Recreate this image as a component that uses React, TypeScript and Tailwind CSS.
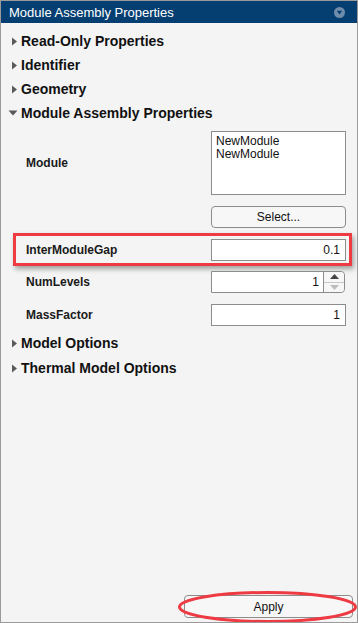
import React from "react";

const font = { fontFamily: '"Liberation Sans", Arial, sans-serif' };

function RightTri() {
  return (
    <svg width="5" height="9" viewBox="0 0 5 9" className="shrink-0">
      <path d="M0 0.5 L5 4.5 L0 8.5 Z" fill="#5a5a5a" />
    </svg>
  );
}
function DownTri() {
  return (
    <svg width="10" height="6" viewBox="0 0 10 6" className="shrink-0">
      <path d="M0.5 0.5 L9.5 0.5 L5 5.5 Z" fill="#5a5a5a" />
    </svg>
  );
}

function Section({ label, open = false }: { label: string; open?: boolean }) {
  return (
    <div className="flex h-[24px] items-center">
      <div className={open ? "flex w-[20px] justify-start pl-[7px]" : "flex w-[20px] justify-start pl-[11px]"}>
        {open ? <DownTri /> : <RightTri />}
      </div>
      <span className="text-[14px] font-bold text-[#111] leading-none">{label}</span>
    </div>
  );
}

function Field({ value }: { value: string }) {
  return (
    <div className="flex h-[22px] w-[135px] items-center justify-end border border-[#8c8c8c] bg-white pr-[5px] text-[12px] text-[#111]">
      {value}
    </div>
  );
}

const labelCls = "w-[185px] text-[12px] font-bold text-[#1a1a1a]";

export default function App() {
  return (
    <div
      style={font}
      className="relative flex h-[623px] w-[358px] flex-col overflow-hidden border border-[#9a9a9a] bg-[#f4f4f4]"
    >
      <div className="flex h-[22px] shrink-0 items-center justify-between bg-[#053f72] pl-[8px] pr-[12px]">
        <span className="text-[13px] text-white leading-none">Module Assembly Properties</span>
        <svg width="11" height="11" viewBox="0 0 11 11">
          <circle cx="5.5" cy="5.5" r="5.5" fill="#6f8cab" />
          <path d="M2.8 3.8 L8.2 3.8 L5.5 7.6 Z" fill="#053f72" />
        </svg>
      </div>

      <div className="flex flex-col pt-[6px]">
        <Section label="Read-Only Properties" />
        <Section label="Identifier" />
        <Section label="Geometry" />
        <Section label="Module Assembly Properties" open />

        <div className="mt-[6px] flex items-center pl-[25px]">
          <span className={labelCls}>Module</span>
          <div className="h-[64px] w-[135px] border border-[#8c8c8c] bg-white px-[4px] pt-[3px] text-[12px] leading-[13px] text-[#111]">
            <div>NewModule</div>
            <div>NewModule</div>
          </div>
        </div>

        <div className="mt-[11px] flex pl-[210px]">
          <div className="flex h-[22px] w-[135px] items-center justify-center rounded-[4px] border border-[#8c8c8c] bg-[#f7f7f7] text-[12px] text-[#111]">
            Select...
          </div>
        </div>

        <div className="ml-[12px] mt-[5px] h-[33px] w-[339px] border-[3px] border-[#ee3b43] shadow-[2px_3px_5px_rgba(0,0,0,0.35)]">
          <div className="flex h-full items-center pl-[10px]">
            <span className={labelCls}>InterModuleGap</span>
            <Field value="0.1" />
          </div>
        </div>

        <div className="mt-[5px] flex items-center pl-[25px]">
          <span className={labelCls}>NumLevels</span>
          <div className="flex h-[22px] w-[134px] rounded-r-[4px] border border-[#8c8c8c] bg-white">
            <div className="flex flex-1 items-center justify-end pr-[4px] text-[12px] text-[#111]">1</div>
            <div className="flex w-[21px] flex-col border-l border-[#8c8c8c] bg-[#f7f7f7] rounded-r-[4px]">
              <div className="flex flex-1 items-center justify-center border-b border-[#c8c8c8]">
                <svg width="9" height="5" viewBox="0 0 9 5"><path d="M0 5 L4.5 0 L9 5 Z" fill="#444" /></svg>
              </div>
              <div className="flex flex-1 items-center justify-center">
                <svg width="9" height="5" viewBox="0 0 9 5"><path d="M0 0 L9 0 L4.5 5 Z" fill="#bdbdbd" /></svg>
              </div>
            </div>
          </div>
        </div>

        <div className="mt-[11px] flex items-center pl-[25px]">
          <span className={labelCls}>MassFactor</span>
          <Field value="1" />
        </div>

        <div className="mt-[5px]">
          <Section label="Model Options" />
          <div className="h-[1px]" />
          <Section label="Thermal Model Options" />
        </div>
      </div>

      <div className="absolute left-[183px] top-[594px] flex h-[23px] w-[169px] items-center justify-center rounded-[4px] border border-[#8c8c8c] bg-[#f7f7f7] text-[12px] text-[#111]">
        Apply
      </div>
      <svg className="pointer-events-none absolute left-[176px] top-[589px]" width="181" height="34" viewBox="0 0 181 34">
        <ellipse cx="90.5" cy="17" rx="88" ry="14.5" fill="none" stroke="#ee3b43" strokeWidth="3" />
      </svg>
    </div>
  );
}
